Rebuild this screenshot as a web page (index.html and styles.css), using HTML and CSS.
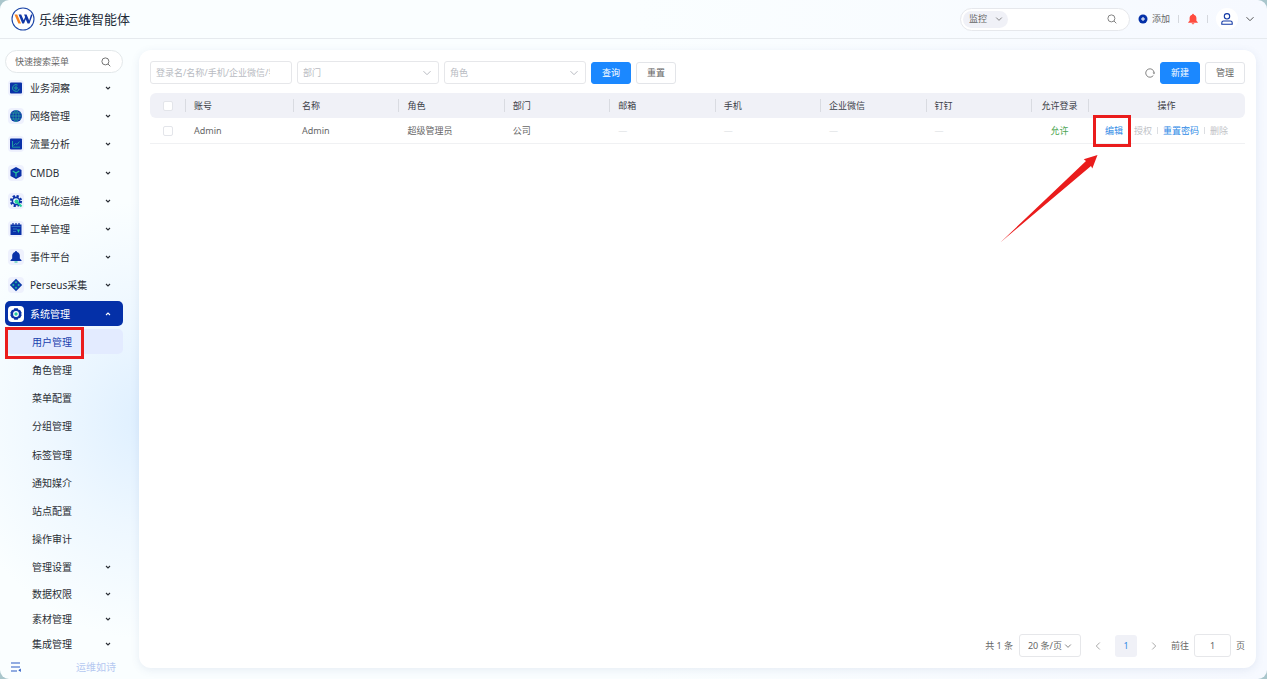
FILE: index.html
```html
<!DOCTYPE html>
<html lang="zh-CN">

<head>
    <meta charset="UTF-8">
    <meta name="viewport" content="width=device-width, initial-scale=1.0">
    <title>乐维运维智能体</title>
    <link rel="stylesheet" href="styles.css">
</head>

<body>
    <svg class="sprite" aria-hidden="true">
        <symbol id="down" viewBox="0 0 10 10"><path d="M1.5 3.2 5 6.7l3.5-3.5" fill="none" stroke="currentColor" /></symbol>
        <symbol id="caret" viewBox="0 0 6 6"><path d="M1 2l2 2 2-2" fill="none" stroke="currentColor" stroke-width="1.1" /></symbol>
        <symbol id="search" viewBox="0 0 10 10"><circle cx="4.4" cy="4.4" r="3.5" fill="none" stroke="currentColor" stroke-width=".9" /><path d="M7 7l2.3 2.3" stroke="currentColor" stroke-width=".9" /></symbol>
    </svg>

    <div class="app">
        <header class="header">
            <svg class="logo" viewBox="0 0 24 24">
                <circle cx="12" cy="12" r="11" fill="#fff" stroke="#1d47a8" stroke-width="1.1" />
                <path d="M3.5 7.500h2.700l3.800 9H7.400z" fill="#f58220" />
                <path d="M7.600 7.500h2.600l2.500 5.700 1.400-3.200-1-2.500h2.500l2.600 5.900L20 7.500h1.700l-3.200 9h-1.900l-1.900-4.200-1.700 4.200h-1.700z" fill="#1238a5" />
            </svg>
            <h1 class="title">乐维运维智能体</h1>
            <div class="global-search">
                <div class="scope">
                    <select aria-label="搜索范围">
                        <option>监控</option>
                    </select>
                    <svg><use href="#down" /></svg>
                </div>
                <input type="text" aria-label="全局搜索">
                <svg class="search-icon"><use href="#search" /></svg>
            </div>
            <button class="add" type="button">
                <svg viewBox="0 0 10 10"><circle cx="5" cy="5" r="4.5" fill="#0430a8" /><path d="M5 3v4M3 5h4" stroke="#fff" /></svg>
                添加
            </button>
            <span class="sep"></span>
            <button class="bell" type="button" aria-label="告警">
                <svg viewBox="0 0 12 12"><path d="M6 .8c.6 0 .9.4.9.9 1.700.4 2.500 1.700 2.500 3.300v2.700l1.400 1.500v.5H1.200v-.5l1.400-1.500V5c0-1.600.8-2.900 2.500-3.300 0-.5.3-.9.9-.9zM4.700 10.200h2.600c0 .7-.6 1.100-1.300 1.100s-1.300-.4-1.300-1.100z" fill="#ff4b3e" /></svg>
            </button>
            <span class="sep"></span>
            <button class="user" type="button" aria-label="用户">
                <span class="avatar">
                    <svg viewBox="0 0 12 12"><circle cx="6" cy="3.300" r="2.700" fill="none" stroke="#1238a5" stroke-width="1.100" /><path d="M.8 11.300v-1.500c0-1 .7-1.800 1.800-1.800h6.800c1.100 0 1.800.8 1.800 1.800v1.500z" fill="none" stroke="#1238a5" stroke-width="1.100" /></svg>
                </span>
                <svg><use href="#down" /></svg>
            </button>
        </header>

        <div class="body">
            <nav class="sidebar">
                <label class="menu-search">
                    <input type="text" placeholder="快速搜索菜单" aria-label="快速搜索菜单">
                    <svg><use href="#search" /></svg>
                </label>
                <ul class="menu">
                    <li><a href="#">
                        <svg class="icon" viewBox="0 0 16 16"><rect x="2" y="2.500" width="12" height="11" rx="1" fill="#0a32a8" /><path d="M11.200 8.800A3.300 3.300 0 1 1 9.500 5" fill="none" stroke="#22a7a0" /><circle cx="8" cy="8" r="1.200" fill="none" stroke="#22a7a0" /></svg>
                        <span>业务洞察</span><svg class="caret"><use href="#caret" /></svg></a></li>
                    <li><a href="#">
                        <svg class="icon" viewBox="0 0 16 16"><circle cx="8" cy="8" r="6" fill="#0a3aa8" /><path d="M2 8h12M3 5h10M3 11h10M8 2v12M8 2c-4 3-4 9 0 12M8 2c4 3 4 9 0 12" fill="none" stroke="#2a9c9c" stroke-width=".8" /></svg>
                        <span>网络管理</span><svg class="caret"><use href="#caret" /></svg></a></li>
                    <li><a href="#">
                        <svg class="icon" viewBox="0 0 16 16"><rect x="2" y="2.500" width="12" height="11" rx="1" fill="#0a32a8" /><path d="M4.500 5v6.200h7.500M5.500 9.500l2-2 1.500 1 2.500-3" fill="none" stroke="#22a7a0" stroke-width=".9" /></svg>
                        <span>流量分析</span><svg class="caret"><use href="#caret" /></svg></a></li>
                    <li><a href="#">
                        <svg class="icon" viewBox="0 0 16 16"><path d="M8 2l5.500 3v6L8 14l-5.500-3V5z" fill="#0a32a8" /><path d="M4.700 6L8 8l3.300-2M8 8v3.800" fill="none" stroke="#24c6a0" stroke-width="1.200" /></svg>
                        <span>CMDB</span><svg class="caret"><use href="#caret" /></svg></a></li>
                    <li><a href="#">
                        <svg class="icon" viewBox="0 0 16 16"><circle cx="8" cy="8" r="5" fill="none" stroke="#0a32a8" stroke-width="2.200" stroke-dasharray="2.200 1.727" /><circle cx="8" cy="8" r="3.600" fill="#e8f6ff" stroke="#0a32a8" stroke-width="1.600" /><circle cx="8.500" cy="8.500" r="2" fill="#24d19a" /><path d="M9.500 9.500l4 4" stroke="#24d19a" stroke-width="2" /></svg>
                        <span>自动化运维</span><svg class="caret"><use href="#caret" /></svg></a></li>
                    <li><a href="#">
                        <svg class="icon" viewBox="0 0 16 16"><path d="M2.500 3.500h11V14h-11z" fill="#0a32a8" /><path d="M5 2v3M8 2v3M11 2v3" stroke="#0a32a8" stroke-width="1.200" /><path d="M3.500 5.500h9M5 8h4M5 10.500h3" stroke="#3a7dc9" stroke-width=".8" /><path d="M9 8.500h3L10.500 12z" fill="#24c6a0" /></svg>
                        <span>工单管理</span><svg class="caret"><use href="#caret" /></svg></a></li>
                    <li><a href="#">
                        <svg class="icon" viewBox="0 0 16 16"><path d="M8 2c.6 0 1 .5 1 1 1.900.5 2.800 2 2.800 3.800v2.800l1.700 1.700v.7h-11v-.7l1.700-1.700V6.800C4.200 5 5.100 3.500 7 3c0-.5.4-1 1-1z" fill="#0a32a8" /><path d="M6.500 13h3" stroke="#24c6a0" stroke-width="1.200" /></svg>
                        <span>事件平台</span><svg class="caret"><use href="#caret" /></svg></a></li>
                    <li><a href="#">
                        <svg class="icon" viewBox="0 0 16 16"><path d="M8 1.800L14.200 8 8 14.200 1.800 8z" fill="#0a3aa8" /><path d="M8 4l1.300 1.300L8 6.600 6.700 5.300zM5.300 6.700L6.600 8 5.300 9.300 4 8zM10.700 6.700L12 8l-1.300 1.300L9.400 8zM8 9.400l1.300 1.300L8 12l-1.300-1.300z" fill="#24b6a0" /></svg>
                        <span>Perseus采集</span><svg class="caret"><use href="#caret" /></svg></a></li>
                    <li><a class="active" href="#">
                        <svg class="icon" viewBox="0 0 16 16"><path d="M6.300 2.300h3.400l.7 1.500 1.700.1 1.700 3L13 8l.8 1.100-1.700 3-1.700.1-.7 1.500H6.300l-.7-1.500-1.700-.1-1.700-3L3 8l-.8-1.100 1.700-3 1.700-.1z" fill="#0a32a8" /><circle cx="8" cy="8" r="2.900" fill="#fff" /><circle cx="8" cy="8" r="1.700" fill="#24c6a0" /></svg>
                        <span>系统管理</span><svg class="caret up"><use href="#caret" /></svg></a></li>
                    <li class="sub"><a class="current" href="#"><span>用户管理</span></a><i class="mark mark-menu"></i></li>
                    <li class="sub"><a href="#"><span>角色管理</span></a></li>
                    <li class="sub"><a href="#"><span>菜单配置</span></a></li>
                    <li class="sub"><a href="#"><span>分组管理</span></a></li>
                    <li class="sub"><a href="#"><span>标签管理</span></a></li>
                    <li class="sub"><a href="#"><span>通知媒介</span></a></li>
                    <li class="sub"><a href="#"><span>站点配置</span></a></li>
                    <li class="sub"><a href="#"><span>操作审计</span></a></li>
                    <li class="sub"><a href="#"><span>管理设置</span><svg class="caret"><use href="#caret" /></svg></a></li>
                    <li class="sub tight"><a href="#"><span>数据权限</span><svg class="caret"><use href="#caret" /></svg></a></li>
                    <li class="sub tight"><a href="#"><span>素材管理</span><svg class="caret"><use href="#caret" /></svg></a></li>
                    <li class="sub tight"><a href="#"><span>集成管理</span><svg class="caret"><use href="#caret" /></svg></a></li>
                </ul>
                <div class="sidebar-foot">
                    <button type="button" aria-label="收起菜单">
                        <svg viewBox="0 0 10 10"><path d="M0 1h9M0 5h9M0 9h6" stroke="#2a5bc4" stroke-width="1.100" /><path d="M9.800 6.500v3.500L7.300 8.300z" fill="#2a5bc4" /></svg>
                    </button>
                    <span>运维如诗</span>
                </div>
            </nav>

            <main class="card">
                <form class="filters">
                    <input class="field" type="text" placeholder="登录名/名称/手机/企业微信/钉钉" aria-label="关键字">
                    <div class="field select">
                        <select aria-label="部门">
                            <option>部门</option>
                        </select>
                        <svg><use href="#down" /></svg>
                    </div>
                    <div class="field select">
                        <select aria-label="角色">
                            <option>角色</option>
                        </select>
                        <svg><use href="#down" /></svg>
                    </div>
                    <button class="button primary" type="button">查询</button>
                    <button class="button" type="reset">重置</button>
                    <button class="refresh" type="button" aria-label="刷新">
                        <svg viewBox="0 0 10 10"><path d="M8.400 7.400A4.200 4.200 0 1 1 9.100 4.400" fill="none" stroke="#666" stroke-width=".8" /><path d="M7.600 4.400H10L9.100 6.300z" fill="#666" /></svg>
                    </button>
                    <button class="button primary" type="button">新建</button>
                    <button class="button" type="button">管理</button>
                </form>

                <table class="users">
                    <thead>
                        <tr>
                            <th class="col-check"><input type="checkbox" aria-label="全选"></th>
                            <th class="col-account">账号</th>
                            <th>名称</th>
                            <th>角色</th>
                            <th>部门</th>
                            <th>邮箱</th>
                            <th>手机</th>
                            <th>企业微信</th>
                            <th>钉钉</th>
                            <th class="col-login">允许登录</th>
                            <th class="col-actions">操作</th>
                        </tr>
                    </thead>
                    <tbody>
                        <tr>
                            <td class="col-check"><input type="checkbox" aria-label="选择 Admin"></td>
                            <td>Admin</td>
                            <td>Admin</td>
                            <td>超级管理员</td>
                            <td>公司</td>
                            <td class="none">—</td>
                            <td class="none">—</td>
                            <td class="none">—</td>
                            <td class="none">—</td>
                            <td class="col-login allowed">允许</td>
                            <td class="col-actions">
                                <div class="actions">
                                    <a href="#">编辑<i class="mark mark-edit"></i></a>
                                    <button type="button" disabled>授权</button>
                                    <span class="divider"></span>
                                    <a href="#">重置密码</a>
                                    <span class="divider"></span>
                                    <button type="button" disabled>删除</button>
                                    <svg class="arrow" viewBox="0 0 98 88"><path d="M.3 87.500L86 6l-2.300-1.700L97.500 0l-5.200 13.500L91 11z" fill="#ea1c1c" /></svg>
                                </div>
                            </td>
                        </tr>
                    </tbody>
                </table>

                <div class="pager">
                    <span>共 1 条</span>
                    <div class="page-size">
                        <select aria-label="每页条数">
                            <option>20 条/页</option>
                        </select>
                        <svg><use href="#down" /></svg>
                    </div>
                    <button class="step prev" type="button" aria-label="上一页"><svg><use href="#down" /></svg></button>
                    <button class="page" type="button">1</button>
                    <button class="step next" type="button" aria-label="下一页"><svg><use href="#down" /></svg></button>
                    <label for="goto">前往</label>
                    <input id="goto" type="text" value="1">
                    <span>页</span>
                </div>
            </main>
        </div>
    </div>
</body>

</html>
```
FILE: styles.css
```css
* {
    box-sizing: border-box;
}

body {
    margin: 0;
    background-color: #a9c6cc;
    font-family: "Noto Sans", "Noto Sans CJK SC", sans-serif;
    font-size: 9px;
    line-height: 14px;
    color: #666;
}

button,
input,
select {
    font: inherit;
    color: inherit;
    margin: 0;
    padding: 0;
    border: none;
    background: none;
    outline: none;
    appearance: none;
}

button {
    cursor: pointer;
}

a {
    color: inherit;
    text-decoration: none;
}

svg {
    display: block;
    flex: none;
    width: 10px;
    height: 10px;
}

.sprite {
    position: absolute;
    width: 0;
    height: 0;
}

.app {
    display: flex;
    flex-direction: column;
    min-height: 100vh;
    border-radius: 9px;
    background:
        radial-gradient(ellipse 200px 220px at 150px 420px, #deefff 0%, rgba(230, 243, 255, 0.6) 50%, rgba(250, 254, 255, 0) 100%),
        linear-gradient(90deg, #fafeff 0%, #fafeff 50%, #f6f9ff 100%);
}

/* header */
.header {
    display: flex;
    align-items: center;
    height: 39px;
    padding: 0 12px 0 11px;
    border-bottom: 1px solid #e6eaee;
}

.logo {
    width: 24px;
    height: 24px;
}

.title {
    margin: 0 auto 0 4px;
    font-size: 13px;
    line-height: 20px;
    font-weight: 400;
    color: #222b38;
}

.global-search {
    display: flex;
    align-items: center;
    width: 170px;
    height: 23px;
    padding: 0 12px 0 2px;
    border: 1px solid #e6e8ec;
    border-radius: 12px;
    background-color: #fff;
}

.global-search input {
    flex: 1;
    min-width: 0;
}

.global-search .search-icon {
    color: #777;
}

.scope,
.select,
.page-size {
    display: grid;
    align-items: center;
}

.scope > *,
.select > *,
.page-size > * {
    grid-area: 1 / 1;
}

.scope svg,
.select svg,
.page-size svg {
    justify-self: end;
    pointer-events: none;
}

.scope {
    width: 45px;
    height: 17px;
    padding: 0 5px 0 6px;
    border-radius: 9px;
    background-color: #f0f1f7;
}

.scope svg {
    width: 8px;
    height: 8px;
}

.add {
    display: flex;
    align-items: center;
    gap: 4px;
    margin: 0 8px 0 8px;
}

.sep {
    width: 1px;
    height: 8px;
    background-color: #d5d8de;
}

.bell {
    margin: 0 8px;
}

.bell svg {
    width: 12px;
    height: 12px;
}

.user {
    display: flex;
    align-items: center;
    gap: 7px;
    margin-left: 8px;
    color: #555;
}

.avatar {
    display: grid;
    place-items: center;
    width: 22px;
    height: 22px;
    border-radius: 50%;
    background-color: #fff;
}

.avatar svg {
    width: 12px;
    height: 12px;
}

.body {
    display: flex;
    flex: 1;
    gap: 16px;
    padding: 11px 11px 0 5px;
}

/* sidebar */
.sidebar {
    display: flex;
    flex-direction: column;
    flex: none;
    width: 118px;
}

.menu-search {
    display: flex;
    align-items: center;
    height: 23px;
    padding: 0 11px 0 9px;
    border: 1px solid #e3e8ea;
    border-radius: 12px;
    background-color: #fff;
}

.menu-search input {
    flex: 1;
    min-width: 0;
}

.menu-search input::placeholder {
    color: #666;
    opacity: 1;
}

.menu {
    display: flex;
    flex-direction: column;
    flex: 1;
    margin: 0;
    padding: 1px 0 0;
    list-style: none;
    font-size: 10px;
    color: #2b2f36;
}

.menu li {
    display: grid;
    align-items: center;
    flex: 1 0 28px;
    position: relative;
}

.menu .tight {
    flex-basis: 25px;
}

.menu a {
    display: flex;
    align-items: center;
    gap: 6px;
    height: 25px;
    padding: 0 12px 0 3px;
    border-radius: 5px;
}

.menu .sub a {
    padding-left: 27px;
}

.menu span {
    flex: 1;
}

.icon {
    width: 16px;
    height: 16px;
    border-radius: 4px;
    background-color: #eef1fd;
}

.caret {
    width: 6px;
    height: 6px;
}

.caret.up {
    transform: rotate(180deg);
}

.menu .active {
    background-color: #0430a8;
    color: #fff;
}

.active .icon {
    background-color: #fff;
}

.menu .current {
    background-color: #e3ebff;
    color: #1a3fae;
}

.sidebar-foot {
    display: flex;
    align-items: center;
    justify-content: space-between;
    height: 22px;
    padding: 0 7px 2px 6px;
    font-size: 10px;
    color: #b6c9f1;
}

/* red callouts */
.mark {
    position: absolute;
    border: 3px solid #ea1c1c;
}

.mark-menu {
    top: -1px;
    left: 0;
    width: 79px;
    height: 32px;
}

.mark-edit {
    top: -9px;
    left: -12px;
    width: 38px;
    height: 32px;
}

.arrow {
    position: absolute;
    top: 31px;
    right: 147px;
    width: 98px;
    height: 88px;
    pointer-events: none;
}

/* content */
.card {
    display: flex;
    flex-direction: column;
    flex: 1;
    min-width: 0;
    margin-bottom: 11px;
    padding: 11px;
    border-radius: 12px;
    background-color: #fff;
    box-shadow: 0 2px 8px rgba(60, 90, 150, 0.1);
}

.filters {
    display: flex;
    align-items: center;
    gap: 5px;
}

.field {
    width: 142px;
    height: 23px;
    padding: 0 6px 0 5px;
    border: 1px solid #e6e7ea;
    border-radius: 3px;
    color: #b8bbc2;
}

input.field {
    padding-right: 21px;
}

.field::placeholder {
    color: #b8bbc2;
    opacity: 1;
}

.button {
    width: 40px;
    height: 22px;
    border: 1px solid #e3e5e9;
    border-radius: 3px;
    background-color: #fff;
}

.button.primary {
    border-color: #1b88ff;
    background-color: #1b88ff;
    color: #fff;
}

.refresh {
    margin-left: auto;
}

.users {
    width: 100%;
    margin-top: 9px;
    table-layout: fixed;
    border-collapse: separate;
    border-spacing: 0;
}

.users th,
.users td {
    height: 25px;
    padding: 0 0 0 9px;
    text-align: left;
    font-weight: 400;
    white-space: nowrap;
}

.users th {
    background: linear-gradient(#d9dbe1, #d9dbe1) left center / 1px 13px no-repeat #f0f1f7;
    color: #3c4048;
}

.users th:first-child {
    border-radius: 6px 0 0 6px;
    background-image: none;
}

.users th:last-child {
    border-radius: 0 6px 6px 0;
}

.users td {
    height: 26px;
    border-bottom: 1px solid #f0f1f3;
}

.users .col-check {
    width: 35px;
    padding-left: 13px;
}

.col-account {
    width: 108px;
}

.users .col-login {
    width: 57px;
    padding: 0;
    text-align: center;
}

.users .col-actions {
    width: 157px;
    padding: 0;
    text-align: center;
}

.users .none {
    color: #d8dade;
}

.users .allowed {
    color: #4ca552;
}

.users input {
    display: block;
    width: 10px;
    height: 10px;
    border: 1px solid #e3e5ea;
    border-radius: 2px;
    background-color: #fff;
}

.actions {
    display: flex;
    align-items: center;
    justify-content: center;
    gap: 5px;
    position: relative;
    color: #2f8be6;
}

.actions a {
    position: relative;
}

.actions a + button {
    margin-left: 6px;
}

.actions button {
    color: #c0c2c6;
}

.divider {
    width: 1px;
    height: 7px;
    background-color: #dcdee2;
}

.pager {
    display: flex;
    align-items: center;
    justify-content: flex-end;
    margin-top: auto;
}

.page-size {
    width: 62px;
    height: 23px;
    margin: 0 12px 0 6px;
    padding: 0 8px;
    border: 1px solid #e6e7ea;
    border-radius: 3px;
}

.page-size svg {
    width: 8px;
    height: 8px;
}

.page {
    width: 22px;
    height: 22px;
    margin: 0 12px;
    border-radius: 3px;
    background-color: #f0f1f7;
    color: #2f8be6;
}

.step {
    color: #aaa;
}

.prev svg {
    transform: rotate(90deg);
}

.next svg {
    transform: rotate(-90deg);
}

.pager label {
    margin-left: 12px;
}

.pager input {
    width: 37px;
    height: 23px;
    margin: 0 5px;
    border: 1px solid #e6e7ea;
    border-radius: 3px;
    text-align: center;
}
```
